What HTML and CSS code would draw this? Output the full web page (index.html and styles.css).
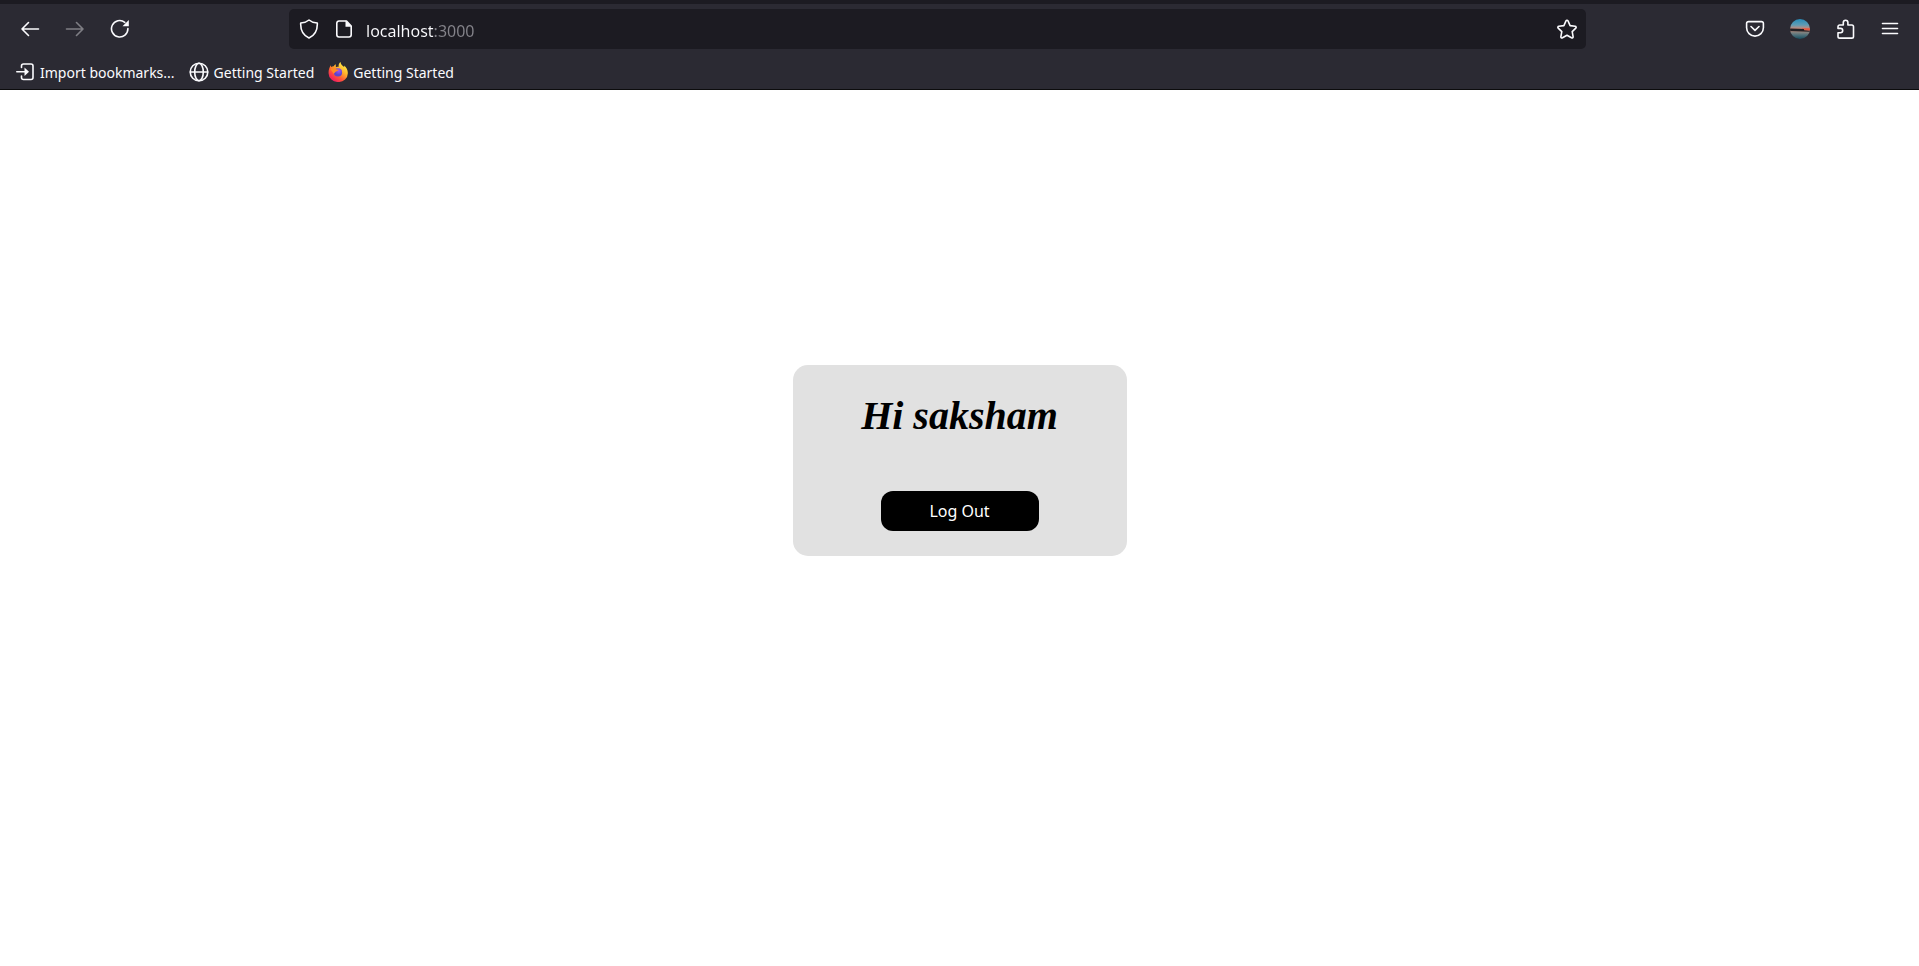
FILE: index.html
```html
<!DOCTYPE html>
<html lang="en">
<head>
<meta charset="utf-8">
<title>localhost:3000</title>
<link rel="stylesheet" href="styles.css">
</head>
<body>
<header class="chrome">
  <div class="toolbar">
    <nav class="tools" aria-label="History">
      <button class="tool" type="button" aria-label="Back"><svg class="icon" viewBox="0 0 20 20"><path d="M18.500 10H2M8.500 3.500L2 10l6.500 6.500"/></svg></button>
      <button class="tool tool-off" type="button" aria-label="Forward" disabled><svg class="icon" viewBox="0 0 20 20"><path d="M1.500 10H18M11.500 3.500L18 10l-6.500 6.500"/></svg></button>
      <button class="tool" type="button" aria-label="Reload"><svg class="icon" viewBox="0 0 20 20"><path d="M17.900 9.500A8.200 8.200 0 1 1 14.800 3.300"/><path class="solid" d="M18.800 1v6.300h-6.300z"/></svg></button>
    </nav>
    <form class="urlbar">
      <svg class="icon" viewBox="0 0 20 20"><path d="M10 1C8 2.800 5 3.800 1.700 4c-.3 6 1.800 12 8.300 15 6.500-3 8.600-9 8.300-15C15 3.800 12 2.800 10 1z"/></svg>
      <svg class="icon" viewBox="0 0 20 20"><path d="M12.500 2H5a2.200 2.200 0 0 0-2.200 2.200v11.600A2.200 2.200 0 0 0 5 18h10a2.200 2.200 0 0 0 2.200-2.200V7z"/><path class="solid" d="M11.500 1.500v6.300h6z"/></svg>
      <input class="address" type="text" aria-label="Address" value="localhost:3000">
      <button class="star" type="button" aria-label="Bookmark this page"><svg class="icon" viewBox="0 0 20 20"><path d="M10 1.200c.5 0 .8.300 1 .7l2.100 4.700 5 .6c1 .1 1.400 1.200.7 1.900l-3.600 3.500.9 5c.2 1-.8 1.600-1.600 1.200L10 16.300l-4.500 2.500c-.8.4-1.800-.2-1.600-1.200l.9-5L1.200 9.100C.5 8.400.9 7.300 1.900 7.200l5-.6L9 1.900c.2-.4.5-.7 1-.7z"/></svg></button>
    </form>
    <div class="tools">
      <button class="tool" type="button" aria-label="Save to Pocket"><svg class="icon" viewBox="0 0 20 20"><path d="M3.500 2.600h13a1.900 1.900 0 0 1 1.900 1.900v4.200a8.400 8.400 0 0 1-16.800 0V4.500a1.900 1.900 0 0 1 1.900-1.900zM6 7.500l4 3.900 4-3.900"/></svg></button>
      <button class="tool" type="button" aria-label="Account"><svg class="icon picture" viewBox="0 0 20 20">
        <defs>
          <clipPath id="disc"><circle cx="10" cy="10" r="10"/></clipPath>
          <linearGradient id="sky" x2="0" y2="1"><stop offset="0" stop-color="#268bb8"/><stop offset=".3" stop-color="#5f9cb4"/><stop offset=".45" stop-color="#b78d83"/><stop offset=".56" stop-color="#b35d50"/><stop offset=".64" stop-color="#8d8680"/><stop offset=".8" stop-color="#50717b"/><stop offset="1" stop-color="#164d5d"/></linearGradient>
        </defs>
        <g clip-path="url(#disc)"><rect width="20" height="20" fill="url(#sky)"/><path fill="#e05943" d="M12 9.300h8v2h-8z"/><path fill="#222024" d="M0 9.600l14 .5v1.200L20 12v.8L0 12z"/></g>
      </svg></button>
      <button class="tool" type="button" aria-label="Extensions"><svg class="icon" viewBox="0 0 20 20"><path d="M3 9V7.700A1.700 1.700 0 0 1 4.700 6H8.300V3.500a2.300 2.300 0 0 1 4.600 0V6h3.900a1.700 1.700 0 0 1 1.700 1.700v9.700a1.700 1.700 0 0 1-1.700 1.700H4.700A1.700 1.700 0 0 1 3 17.400v-3.600h2.500a2.200 2.200 0 0 0 0-4.400H3z"/></svg></button>
      <button class="tool" type="button" aria-label="Menu"><svg class="icon" viewBox="0 0 20 20"><path d="M2.500 4.500h15M2.500 9.500h15M2.500 14.500h15"/></svg></button>
    </div>
  </div>
  <nav class="bookmarks" aria-label="Bookmarks">
    <a class="bookmark" href="#import"><svg class="icon" viewBox="0 0 20 20"><path d="M6.500 5.500V4a2 2 0 0 1 2-2H16a2 2 0 0 1 2 2v11.500a2 2 0 0 1-2 2H8.500a2 2 0 0 1-2-2V14M1.800 9.800H11"/><path class="solid" d="M9.500 5.500l4.500 4.300-4.500 4.300z"/></svg>Import bookmarks...</a>
    <a class="bookmark" href="#start"><svg class="icon" viewBox="0 0 20 20"><circle cx="10" cy="10" r="8.800"/><ellipse cx="10" cy="10" rx="4.300" ry="8.800"/><path d="M1.500 10h17"/></svg>Getting Started</a>
    <a class="bookmark" href="#firefox"><svg class="icon picture" viewBox="0 0 20 20">
      <defs>
        <linearGradient id="flame" x1=".85" y1=".1" x2=".2" y2=".95"><stop offset="0" stop-color="#fff04a"/><stop offset=".35" stop-color="#ffb32b"/><stop offset=".65" stop-color="#ff5a36"/><stop offset="1" stop-color="#ee1565"/></linearGradient>
        <radialGradient id="globe" cx=".6" cy=".3"><stop offset="0" stop-color="#a552f5"/><stop offset="1" stop-color="#5a45cf"/></radialGradient>
      </defs>
      <path fill="url(#flame)" d="M12.500 0c.3 2.800 2 3.500 3.600 5 .2-.5.100-1 0-1.600 2.400 1.700 3.900 4.800 3.700 8a9.600 8.600 0 0 1-19.200.1C.4 8.300 1.300 5.500 2.700 3.200l.5 1.900C4 4.500 4.700 4.200 5.700 4.200c.5-.9 1.200-1.500 2.100-2l.1 3c1.200-.5 2-.4 2.800-.4C10.300 3 11 1.300 12.500 0z"/>
      <circle cx="10" cy="10.400" r="4.100" fill="url(#globe)"/>
      <path fill="#ff8a24" d="M2.500 7.200c1.400-1.300 3-1.600 4.500-1 .8 1 2 1.400 3.600 1.500-.3 1-1.300 1.300-2.600 1.700-.8.800-1.800 1.600-2.300 2.400-1.200-1.600-2-3-3.200-4.600z"/>
    </svg>Getting Started</a>
  </nav>
</header>
<main class="page">
  <section class="card">
    <h1 class="greeting">Hi saksham</h1>
    <button class="logout" type="button">Log Out</button>
  </section>
</main>
</body>
</html>
```

FILE: styles.css
```css
* {
  box-sizing: border-box;
}

body {
  display: flex;
  flex-direction: column;
  min-height: 100vh;
  margin: 0;
  background: #fff;
  font-family: "Noto Sans", sans-serif;
}

button {
  padding: 0;
  border: 0;
  background: none;
  color: inherit;
  font: inherit;
}

.chrome {
  border-top: 4px solid #1c1b22;
  border-bottom: 1px solid #0c0c0d;
  background: #2b2a33;
  color: #fbfbfe;
}

.toolbar {
  display: flex;
  align-items: center;
  padding: 5px 7px 4px;
}

.tools {
  display: flex;
}

.tool {
  display: flex;
  align-items: center;
  justify-content: center;
  width: 45px;
  height: 40px;
}

.tool-off {
  opacity: 0.4;
}

.icon {
  display: block;
  flex: none;
  width: 20px;
  height: 20px;
  fill: none;
  stroke: currentColor;
  stroke-width: 1.6;
  stroke-linecap: round;
  stroke-linejoin: round;
}

.icon .solid {
  fill: currentColor;
  stroke: none;
}

.picture {
  stroke: none;
}

.urlbar {
  display: flex;
  flex: 1;
  align-items: center;
  gap: 15px;
  height: 40px;
  margin: 0 146px 0 147px;
  padding: 0 9px 0 10px;
  border-radius: 5px;
  background: #1c1b22;
}

.address {
  flex: 1;
  min-width: 0;
  height: 32px;
  margin-left: -3px;
  padding: 3px 0 0;
  border: 0;
  outline: 0;
  background: linear-gradient(90deg, #fbfbfe 68px, #84838a 68px);
  -webkit-background-clip: text;
  background-clip: text;
  color: transparent;
  font: 16px "Noto Sans", sans-serif;
}

.bookmarks {
  display: flex;
  gap: 14px;
  height: 36px;
  padding: 0 15px;
}

.bookmark {
  display: flex;
  align-items: center;
  gap: 5px;
  height: 38px;
  color: inherit;
  font-size: 14px;
  text-decoration: none;
}

.page {
  display: flex;
  flex: 1;
  align-items: center;
  justify-content: center;
  padding-bottom: 136px;
}

.card {
  display: flex;
  flex-direction: column;
  align-items: center;
  gap: 52px;
  min-width: 334px;
  padding: 28px 24px 25px;
  border-radius: 15px;
  background: #e1e1e1;
}

.greeting {
  margin: 0;
  color: #000;
  font: italic bold 40px/46px "Liberation Serif", serif;
}

.logout {
  width: 158px;
  height: 40px;
  padding-top: 1px;
  border-radius: 12px;
  background: #000;
  color: #fff;
  font-size: 16px;
}
```
